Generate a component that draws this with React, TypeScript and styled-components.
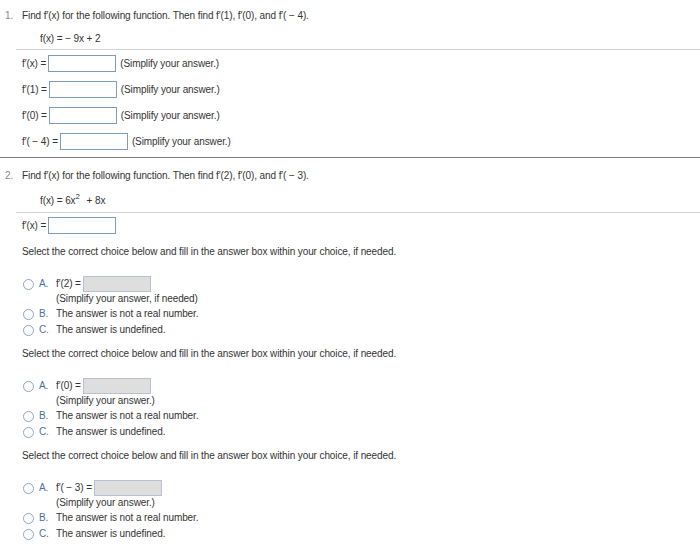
import React from "react";
import styled, { createGlobalStyle } from "styled-components";

const Global = createGlobalStyle`
  html, body { margin: 0; padding: 0; background: #ffffff; }
  body { font-family: "Liberation Sans", Arial, sans-serif; font-size: 10px; letter-spacing: -0.1px; color: #333333; }
`;

const Page = styled.div`
  width: 700px;
  padding-top: 9px;
`;

const Question = styled.section<{ $divider?: boolean }>`
  padding-bottom: ${(p) => (p.$divider ? "7px" : "0")};
  border-bottom: ${(p) => (p.$divider ? "1px solid #7f7f7f" : "none")};
  margin-bottom: ${(p) => (p.$divider ? "11px" : "0")};
`;

const Header = styled.div`
  display: flex;
  line-height: 13px;
  height: 13px;
`;

const Num = styled.span`
  width: 17px;
  padding-left: 5px;
  color: #888888;
`;

const Formula = styled.div<{ $top: number }>`
  margin-top: ${(p) => p.$top}px;
  padding-left: 40px;
  line-height: 13px;
  height: 13px;
`;

const Sup = styled.sup`
  font-size: 8px;
  position: relative;
  top: -1px;
  margin-right: 4px;
  line-height: 0;
`;

const Rule = styled.div<{ $top: number }>`
  margin: ${(p) => p.$top}px 0 0 16px;
  height: 1px;
  background: #d3d3d3;
`;

const Rows = styled.div<{ $top: number }>`
  margin-top: ${(p) => p.$top}px;
  padding-left: 22px;
  display: flex;
  flex-direction: column;
  gap: 9px;
`;

const Row = styled.div`
  display: flex;
  align-items: center;
  height: 17px;
`;

const Label = styled.span`
  white-space: pre;
  margin-right: 2px;
`;

const Box = styled.span<{ $filled?: boolean; $w?: number }>`
  display: inline-block;
  width: ${(p) => p.$w ?? 66}px;
  height: ${(p) => (p.$filled ? 14 : 15)}px;
  border: 1px solid ${(p) => (p.$filled ? "#b7c1cf" : "#7f9db9")};
  background: ${(p) => (p.$filled ? "#dedede" : "#ffffff")};
`;

const Hint = styled.span`
  margin-left: 4px;
`;

const Prompt = styled.div<{ $top: number }>`
  margin-top: ${(p) => p.$top}px;
  padding-left: 22px;
  line-height: 13px;
  height: 13px;
`;

const Choices = styled.div`
  margin-top: 18px;
  padding-left: 23px;
  display: flex;
  flex-direction: column;
`;

const Choice = styled.div`
  display: flex;
  align-items: flex-start;
  line-height: 16px;
`;

const Radio = styled.span`
  width: 9px;
  height: 9px;
  border: 1px solid #8aa6c8;
  border-radius: 50%;
  background: #ffffff;
  margin-top: 3px;
  flex: none;
`;

const Letter = styled.span`
  width: 17px;
  padding-left: 5px;
  color: #4f6f9f;
  flex: none;
`;

const Body = styled.div`
  display: flex;
  flex-direction: column;
`;

const Inline = styled.div`
  display: flex;
  align-items: center;
  height: 16px;
`;

const Note = styled.div`
  line-height: 14px;
`;

function ChoiceBlock({ label, note, w }: { label: string; note: string; w?: number }) {
  return (
    <Choices>
      <Choice>
        <Radio />
        <Letter>A.</Letter>
        <Body>
          <Inline>
            <Label>{label}</Label>
            <Box $filled $w={w ?? 66} />
          </Inline>
          <Note>{note}</Note>
        </Body>
      </Choice>
      <Choice>
        <Radio />
        <Letter>B.</Letter>
        <span>The answer is not a real number.</span>
      </Choice>
      <Choice>
        <Radio />
        <Letter>C.</Letter>
        <span>The answer is undefined.</span>
      </Choice>
    </Choices>
  );
}

export default function App() {
  const prompt = "Select the correct choice below and fill in the answer box within your choice, if needed.";
  return (
    <Page>
      <Global />
      <Question $divider>
        <Header>
          <Num>1.</Num>
          <span>Find f′(x) for the following function. Then find f′(1), f′(0), and f′( − 4).</span>
        </Header>
        <Formula $top={10}>f(x) = − 9x + 2</Formula>
        <Rule $top={4} />
        <Rows $top={5}>
          <Row>
            <Label>f′(x) =</Label>
            <Box />
            <Hint>(Simplify your answer.)</Hint>
          </Row>
          <Row>
            <Label>f′(1) =</Label>
            <Box />
            <Hint>(Simplify your answer.)</Hint>
          </Row>
          <Row>
            <Label>f′(0) =</Label>
            <Box />
            <Hint>(Simplify your answer.)</Hint>
          </Row>
          <Row>
            <Label>f′( − 4) =</Label>
            <Box />
            <Hint>(Simplify your answer.)</Hint>
          </Row>
        </Rows>
      </Question>
      <Question>
        <Header>
          <Num>2.</Num>
          <span>Find f′(x) for the following function. Then find f′(2), f′(0), and f′( − 3).</span>
        </Header>
        <Formula $top={12}>
          f(x) = 6x<Sup>2</Sup> + 8x
        </Formula>
        <Rule $top={5} />
        <Rows $top={4}>
          <Row>
            <Label>f′(x) =</Label>
            <Box />
          </Row>
        </Rows>
        <Prompt $top={11}>{prompt}</Prompt>
        <ChoiceBlock label="f′(2) =" note="(Simplify your answer, if needed)" />
        <Prompt $top={9}>{prompt}</Prompt>
        <ChoiceBlock label="f′(0) =" note="(Simplify your answer.)" />
        <Prompt $top={9}>{prompt}</Prompt>
        <ChoiceBlock label="f′( − 3) =" note="(Simplify your answer.)" />
      </Question>
    </Page>
  );
}
